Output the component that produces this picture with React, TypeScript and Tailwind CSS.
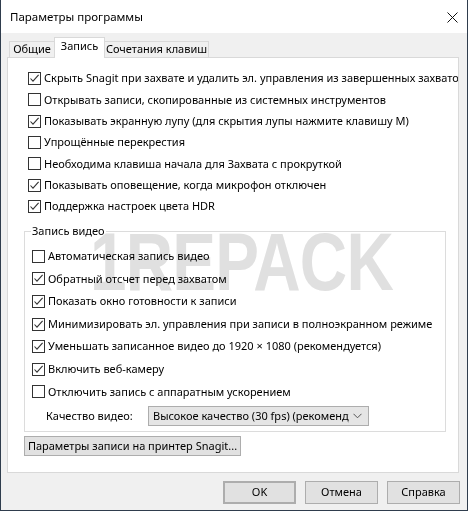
import React from 'react';

const Box = ({ checked }: { checked: boolean }) => (
  <span className="w-[13px] h-[13px] border border-[#333333] bg-white flex items-center justify-center shrink-0">
    {checked && (
      <svg width="11" height="11" viewBox="0 0 11 11">
        <path d="M1.5 5.5 L4 8.2 L9.6 1.8" fill="none" stroke="#333333" strokeWidth="1.1" />
      </svg>
    )}
  </span>
);

const Row = ({ checked, label }: { checked: boolean; label: string }) => (
  <div className="flex-1 flex items-center gap-[3px] whitespace-nowrap">
    <Box checked={checked} />
    <span>{label}</span>
  </div>
);

const Button = ({ children, className }: { children: React.ReactNode; className: string }) => (
  <button className={`bg-[#e1e1e1] border-[#adadad] flex items-center justify-center whitespace-nowrap shrink-0 ${className}`}>
    {children}
  </button>
);

const App: React.FC = () => {
  const general = [
    { checked: true, label: 'Скрыть Snagit при захвате и удалить эл. управления из завершенных захватов' },
    { checked: false, label: 'Открывать записи, скопированные из системных инструментов' },
    { checked: true, label: 'Показывать экранную лупу (для скрытия лупы нажмите клавишу M)' },
    { checked: false, label: 'Упрощённые перекрестия' },
    { checked: false, label: 'Необходима клавиша начала для Захвата с прокруткой' },
    { checked: true, label: 'Показывать оповещение, когда микрофон отключен' },
    { checked: true, label: 'Поддержка настроек цвета HDR' },
  ];

  const video = [
    { checked: false, label: 'Автоматическая запись видео' },
    { checked: true, label: 'Обратный отсчет перед захватом' },
    { checked: true, label: 'Показать окно готовности к записи' },
    { checked: true, label: 'Минимизировать эл. управления при записи в полноэкранном режиме' },
    { checked: true, label: 'Уменьшать записанное видео до 1920 × 1080 (рекомендуется)' },
    { checked: true, label: 'Включить веб-камеру' },
    { checked: false, label: 'Отключить запись с аппаратным ускорением' },
  ];

  return (
    <div className="w-[468px] h-[511px] bg-[#f0f0f0] border-x border-b border-[#2f3d4d] flex flex-col text-[11px] text-black font-['Noto_Sans',sans-serif] overflow-hidden">
      {/* Title bar */}
      <div className="h-[33px] bg-white flex items-center justify-between pl-[9px] pr-[9px] pt-px shrink-0">
        <span className="text-[11.5px]">Параметры программы</span>
        <svg width="11" height="11" viewBox="0 0 11 11">
          <path d="M0.5 0.5 L10.5 10.5 M10.5 0.5 L0.5 10.5" stroke="#111" strokeWidth="1" />
        </svg>
      </div>

      {/* Tabs */}
      <div className="flex items-end h-[21px] mt-[4px] ml-[8px] -mb-px relative z-10 whitespace-nowrap">
        <div className="w-[46px] h-[17px] border border-[#d9d9d9] bg-[#f0f0f0] flex items-center justify-center">Общие</div>
        <div className="w-[51px] h-[21px] -ml-px border border-b-0 border-[#d9d9d9] bg-white flex items-center justify-center pb-[3px]">Запись</div>
        <div className="w-[105px] h-[17px] -ml-px border border-[#d9d9d9] bg-[#f0f0f0] flex items-center justify-center">Сочетания клавиш</div>
      </div>

      {/* Panel */}
      <div className="relative ml-[6px] w-[452px] h-[416px] bg-white border border-[#d9d9d9] overflow-hidden flex flex-col items-start">
        {/* watermark */}
        <div className="absolute left-[82px] top-[163px] text-[82px] leading-none font-black font-['Liberation_Sans',sans-serif] text-[#e0e0e0] mix-blend-multiply scale-x-[0.8] origin-left tracking-[-1px] pointer-events-none">
          1REPACK
        </div>

        <div className="flex flex-col h-[149px] mt-[10px] pl-[20px]">
          {general.map((g, i) => (
            <Row key={i} checked={g.checked} label={g.label} />
          ))}
        </div>

        <fieldset className="ml-[16px] w-[422px] mt-[6px] border border-[#dcdcdc] px-[6px] pb-[5px]">
          <legend className="px-[1px] leading-[16px]">Запись видео</legend>
          <div className="flex flex-col h-[158px] mt-[6px] pl-[1px]">
            {video.map((v, i) => (
              <Row key={i} checked={v.checked} label={v.label} />
            ))}
          </div>
          <div className="flex items-center mt-[3px] h-[20px] pl-[15px]">
            <span className="w-[102px]">Качество видео:</span>
            <div className="w-[221px] h-[20px] bg-[#e5e5e5] border border-[#adadad] flex items-center justify-between pl-[4px] pr-[6px]">
              <span className="whitespace-nowrap overflow-hidden w-[196px]">Высокое качество (30 fps) (рекомендуется)</span>
              <svg width="9" height="6" viewBox="0 0 9 6">
                <path d="M0.5 0.8 L4.5 4.8 L8.5 0.8" fill="none" stroke="#555" strokeWidth="1" />
              </svg>
            </div>
          </div>
        </fieldset>

        <Button className="ml-[16px] mt-[4px] w-[217px] h-[20px] border">
          Параметры записи на принтер Snagit...
        </Button>
      </div>

      {/* Bottom buttons */}
      <div className="flex justify-end gap-[9px] mt-[8px] pr-[7px]">
        <Button className="w-[73px] h-[23px] border-2 border-[#3c8ad0]">OK</Button>
        <Button className="w-[73px] h-[23px] border">Отмена</Button>
        <Button className="w-[73px] h-[23px] border">Справка</Button>
      </div>
    </div>
  );
};

export default App;
